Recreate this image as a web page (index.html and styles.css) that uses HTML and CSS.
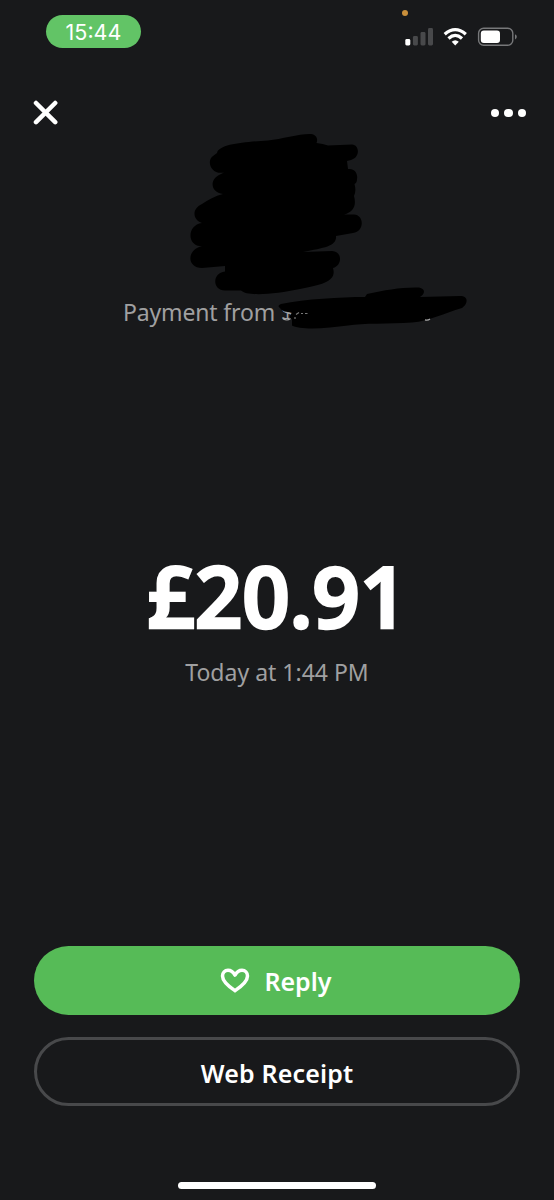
FILE: index.html
```html
<!DOCTYPE html>
<html lang="en">
<head>
<meta charset="UTF-8">
<meta name="viewport" content="width=device-width, initial-scale=1.0">
<title>Payment</title>
<link rel="stylesheet" href="styles.css">
</head>
<body>
    <div class="status-bar">
        <span class="time">15:44</span>
        <span class="recording-dot"></span>
        <svg class="status-icons" width="114" height="22" viewBox="404 26 114 22">
            <!-- Signal -->
            <rect x="405.3" y="39" width="5" height="6.5" rx="1.4" fill="#fff"/>
            <g fill="#48494b">
                <rect x="412.9" y="36" width="5" height="9.5" rx="1.4"/>
                <rect x="420.5" y="32" width="5" height="13.5" rx="1.4"/>
                <rect x="428" y="28" width="5" height="17.5" rx="1.4"/>
            </g>
            <!-- Wifi -->
            <g fill="none" stroke="#fff" stroke-width="3.3">
                <path d="M444.7 34.2Q455.2 25 465.8 34.2"/>
                <path d="M448.5 38.4Q455.2 32.4 462 38.4"/>
            </g>
            <path d="M451.7 41.8Q455.2 38.6 458.8 41.8L455.2 45.4Z" fill="#fff"/>
            <!-- Battery -->
            <rect x="478.6" y="28.2" width="34.2" height="17" rx="5" fill="none" stroke="#77787a" stroke-width="1.4"/>
            <rect x="480.8" y="30.4" width="19.2" height="12.7" rx="3" fill="#fff"/>
            <path d="M515 34.2Q516.8 35 516.8 36.8T515 39.4Z" fill="#77787a"/>
        </svg>
    </div>

    <nav>
        <svg width="26" height="26" viewBox="0 0 26 26">
            <path d="M3 3L22.2 22.2M22.2 3L3 22.2" stroke="#fff" stroke-width="4.5" stroke-linecap="round"/>
        </svg>
        <div class="more"><i></i><i></i><i></i></div>
    </nav>

    <header>
        <p class="sender">Payment from $</p>
        <svg class="scribble" width="290" height="205" viewBox="185 130 290 205">
            <path d="M217 153C219 144 245 142 268 140.5C282 139 300 133.5 311 134C317 135 318 139 316.5 143Q323 143.5 328 145.5L352 144.5C360 145 360 158 351 160L347 161L348 169C355 168 358 174 357 179Q357 183 354.5 184Q356.5 191 354 196C356.5 205 354 212 344 214.5L354 214.5C364 215 365 231 353 233L336 236C337 246 325 248 303 252L332 251C342 251 343 265 333 268C337 281 323 285 300 289C276 294 248 297 241 290.5L225 290.5C212 290 212 273 225 271.5V266L202 268C187 268 186 250 202 246H200C187 245 187 225 202 223C193 220 191 209 202 204C208 200 215 196 223 194C211 193 209 180 219 175L224 172.5C211 175 206 161 213 156Z"/>
            <path d="M281 304C306 299 340 297 365 297L367 294C385 290 402 287 419 287.5C426 289 425 294 420 297L460 296C469 296 468 304 462 308C444 313 430 321 412 322.5C389 324 363 323 348 325.5C328 328 302 331 291 325C288 321 289 316 292 312.5C286 312 282 311.5 280 308C278 307 278 305 281 304Z"/>
            <path d="M285 319H292V328H285Z" fill="#18191b"/>
            <g fill="none" stroke="#aaa" stroke-width="1.2">
                <path d="M283 318.5Q287 321.5 290.5 318.5"/>
                <path d="M295 319V317M296 314.5L299 312.5M301 313.5H303M305 313.5H307.5" opacity="0.7"/>
                <path d="M425 319.8Q428 320.6 430 319"/>
            </g>
        </svg>
    </header>

    <main>
        <h1>£20.91</h1>
        <p class="date">Today at 1:44 PM</p>
    </main>

    <footer>
        <button type="button" class="reply">
            <svg width="30" height="26" viewBox="0 0 30 26">
                <path d="M15 22.7C11 20 2.5 14.3 2.5 8C2.5 4.6 4.8 2.3 8 2.3C11.5 2.3 13.8 5 15 7.1C16.2 5 18.5 2.3 22 2.3C25.2 2.3 27.5 4.6 27.5 8C27.5 14.3 19 20 15 22.7Z" fill="none" stroke="#fff" stroke-width="3.5" stroke-linejoin="round"/>
            </svg>
            <span>Reply</span>
        </button>
        <button type="button" class="receipt"><span>Web Receipt</span></button>
        <div class="home-indicator"></div>
    </footer>
</body>
</html>
```
FILE: styles.css
```css
* {
    box-sizing: border-box;
}

body {
    display: flex;
    flex-direction: column;
    width: 554px;
    height: 1200px;
    margin: 0;
    overflow: hidden;
    background-color: #18191b;
    color: #fff;
    font-family: 'Noto Sans', sans-serif;
}

.status-bar {
    position: relative;
    display: flex;
    justify-content: space-between;
    height: 100px;
    padding: 15px 36px 0 46px;
}

.time {
    width: 95px;
    height: 33px;
    border-radius: 17px;
    background-color: #62c466;
    font-family: Inter, sans-serif;
    font-size: 21.5px;
    font-weight: 400;
    line-height: 34px;
    text-align: center;
}

.status-icons {
    margin-top: 11px;
}

/* Sits above the signal bars */
.recording-dot {
    position: absolute;
    top: 10px;
    left: 402px;
    width: 6px;
    height: 6px;
    border-radius: 50%;
    background-color: #c98f3b;
}

nav {
    display: flex;
    justify-content: space-between;
    align-items: center;
    height: 26px;
    padding: 0 28px 0 33px;
}

.more {
    display: flex;
    gap: 5px;
}

.more i {
    width: 8.3px;
    height: 8.3px;
    border-radius: 50%;
    background-color: #fff;
}

header {
    position: relative;
    height: 422px;
    padding: 170px 0 0 123px;
}

.sender,
.date {
    margin: 0;
    color: #a0a0a1;
    font-size: 23px;
    line-height: 32px;
}

.sender {
    letter-spacing: -0.15px;
}

/* Drawn over the avatar and the sender name */
.scribble {
    position: absolute;
    top: 4px;
    left: 185px;
}

main {
    text-align: center;
}

h1 {
    margin: 0;
    font-size: 84px;
    font-weight: 600;
    line-height: 96px;
    letter-spacing: -0.6px;
    -webkit-text-stroke: 2.5px #fff;
}

.date {
    margin-top: 12px;
}

footer {
    display: flex;
    flex-direction: column;
    align-items: center;
    margin-top: auto;
    padding: 0 34px 11px;
}

button {
    display: flex;
    justify-content: center;
    align-items: center;
    width: 486px;
    height: 69px;
    padding: 0;
    border: none;
    border-radius: 35px;
    color: #fff;
    font-family: 'Noto Sans', sans-serif;
    font-size: 25px;
    font-weight: 600;
}

.reply {
    gap: 14px;
    margin-bottom: 22px;
    padding-right: 2px;
    background-color: #56bb57;
}

.receipt {
    margin-bottom: 76px;
    padding-top: 2px;
    border: 3px solid #48494b;
    background-color: transparent;
    letter-spacing: 0.15px;
}

.home-indicator {
    width: 198px;
    height: 7px;
    border-radius: 4px;
    background-color: #fff;
}
```
